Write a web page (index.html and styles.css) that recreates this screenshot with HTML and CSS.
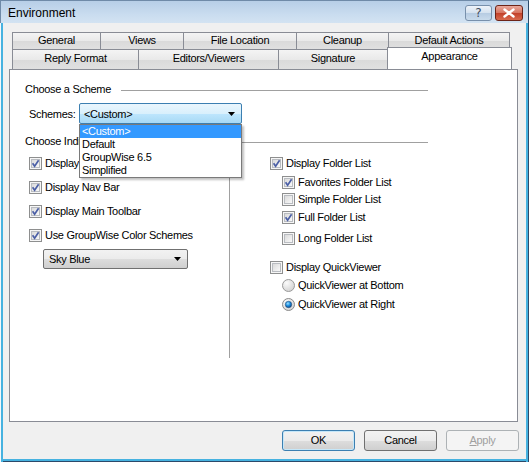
FILE: index.html
```html
<!DOCTYPE html>
<html>
<head>
<meta charset="utf-8">
<link rel="stylesheet" href="styles.css">
</head>
<body>
<svg class="defs" width="0" height="0">
  <defs>
    <linearGradient id="cbg" x1="0" y1="0" x2="1" y2="1">
      <stop offset="0" stop-color="#d8d8d8"/>
      <stop offset="1" stop-color="#fbfbfb"/>
    </linearGradient>
    <radialGradient id="rbg" cx="0.35" cy="0.3" r="0.8">
      <stop offset="0" stop-color="#fbfbfb"/>
      <stop offset="1" stop-color="#cfcfcf"/>
    </radialGradient>
    <radialGradient id="dot" cx="0.4" cy="0.35" r="0.7">
      <stop offset="0" stop-color="#9fe0ff"/>
      <stop offset="0.5" stop-color="#1a8ee0"/>
      <stop offset="1" stop-color="#0c3f80"/>
    </radialGradient>
    <symbol id="cb" viewBox="0 0 13 13">
      <rect x="0.5" y="0.5" width="12" height="12" fill="#f6f6f6" stroke="#8e8f8f"/>
      <rect x="2.5" y="2.5" width="8" height="8" fill="url(#cbg)" stroke="#b9bcc1"/>
    </symbol>
    <symbol id="cbc" viewBox="0 0 13 13">
      <rect x="0.5" y="0.5" width="12" height="12" fill="#f6f6f6" stroke="#8e8f8f"/>
      <rect x="2.5" y="2.5" width="8" height="8" fill="url(#cbg)" stroke="#b9bcc1"/>
      <path d="M3.6 6.2 L5.6 9.2 L9.6 3.2" stroke="#4b5fa6" stroke-width="1.7" fill="none"/>
    </symbol>
    <symbol id="rb" viewBox="0 0 13 13">
      <circle cx="6.5" cy="6.5" r="6" fill="url(#rbg)" stroke="#9a9a9a"/>
    </symbol>
    <symbol id="rbc" viewBox="0 0 13 13">
      <circle cx="6.5" cy="6.5" r="6" fill="url(#rbg)" stroke="#8a8a8a"/>
      <circle cx="6.5" cy="6.5" r="3.2" fill="url(#dot)" stroke="#2a4f7a" stroke-width="0.6"/>
    </symbol>
    <symbol id="arrow" viewBox="0 0 7 4">
      <path d="M0 0 H7 L3.5 4 Z" fill="#000"/>
    </symbol>
  </defs>
</svg>

<div class="win">
  <div class="titlebar">
    <span class="title">Environment</span>
    <div class="tbtns">
      <div class="tbtn help">?</div>
      <div class="tbtn close">
        <svg width="14" height="10" viewBox="0 0 14 10"><path d="M2.5 1.5 L11.5 8.5 M11.5 1.5 L2.5 8.5" stroke="#fff" stroke-width="2.4" stroke-linecap="round"/></svg>
      </div>
    </div>
  </div>
  <div class="client">
    <div class="tabs">
      <div class="tabrow row1">
        <div class="tab w-general">General</div>
        <div class="tab w-views">Views</div>
        <div class="tab w-file">File Location</div>
        <div class="tab w-cleanup">Cleanup</div>
        <div class="tab w-default">Default Actions</div>
      </div>
      <div class="tabrow row2">
        <div class="tab w-reply">Reply Format</div>
        <div class="tab w-editors">Editors/Viewers</div>
        <div class="tab w-sig">Signature</div>
        <div class="tab active w-appear">Appearance</div>
      </div>
    </div>

    <div class="panel">
      <div class="ghead"><span>Choose a Scheme</span><i class="gline"></i></div>
      <div class="schemes">
        <span class="slabel">Schemes:</span>
        <div class="combo-wrap">
          <div class="combo hot"><span>&lt;Custom&gt;</span><svg class="arr" width="7" height="4"><use href="#arrow"/></svg></div>
          <div class="droplist">
            <div class="item sel">&lt;Custom&gt;</div>
            <div class="item">Default</div>
            <div class="item">GroupWise 6.5</div>
            <div class="item">Simplified</div>
          </div>
        </div>
      </div>
      <div class="ghead g2"><span class="clip2">Choose Individual Settings</span><i class="gline"></i></div>

      <div class="cols">
        <div class="lcol">
          <div class="row"><svg class="box" width="13" height="13"><use href="#cbc"/></svg><span class="clip1">Display Toolbar</span></div>
          <div class="row"><svg class="box" width="13" height="13"><use href="#cbc"/></svg><span>Display Nav Bar</span></div>
          <div class="row"><svg class="box" width="13" height="13"><use href="#cbc"/></svg><span>Display Main Toolbar</span></div>
          <div class="row"><svg class="box" width="13" height="13"><use href="#cbc"/></svg><span>Use GroupWise Color Schemes</span></div>
          <div class="combo gray sky"><span>Sky Blue</span><svg class="arr" width="7" height="4"><use href="#arrow"/></svg></div>
        </div>
        <div class="rcol">
          <div class="row"><svg class="box" width="13" height="13"><use href="#cbc"/></svg><span>Display Folder List</span></div>
          <div class="row sub m6"><svg class="box" width="13" height="13"><use href="#cbc"/></svg><span>Favorites Folder List</span></div>
          <div class="row sub m4"><svg class="box" width="13" height="13"><use href="#cb"/></svg><span>Simple Folder List</span></div>
          <div class="row sub m5"><svg class="box" width="13" height="13"><use href="#cbc"/></svg><span>Full Folder List</span></div>
          <div class="row sub m8"><svg class="box" width="13" height="13"><use href="#cb"/></svg><span>Long Folder List</span></div>
          <div class="row m16"><svg class="box" width="13" height="13"><use href="#cb"/></svg><span>Display QuickViewer</span></div>
          <div class="row sub m5"><svg class="box" width="13" height="13"><use href="#rb"/></svg><span>QuickViewer at Bottom</span></div>
          <div class="row sub m6"><svg class="box" width="13" height="13"><use href="#rbc"/></svg><span>QuickViewer at Right</span></div>
        </div>
      </div>
    </div>

    <div class="buttons">
      <div class="btn default">OK</div>
      <div class="btn">Cancel</div>
      <div class="btn disabled"><u>A</u>pply</div>
    </div>
  </div>
</div>
</body>
</html>
```

FILE: styles.css
```css
* { box-sizing: border-box; }
html, body { margin: 0; padding: 0; }
body {
  width: 529px;
  height: 462px;
  overflow: hidden;
  font-family: "Liberation Sans", Arial, sans-serif;
  font-size: 11px;
  letter-spacing: -0.3px;
  color: #000;
  background: #f0f0f0;
}
.defs { position: absolute; width: 0; height: 0; }

.win {
  width: 529px;
  height: 462px;
  display: flex;
  flex-direction: column;
  background: #f0f0f0;
}

.titlebar {
  height: 23px;
  flex: none;
  display: flex;
  align-items: center;
  justify-content: space-between;
  padding: 0 5px 0 7px;
  background: linear-gradient(#b7cee7, #c9dcef 60%, #d3e3f2);
  border-top: 1px solid #6f8aa8;
  border-left: 1px solid #6f8aa8;
  border-right: 1px solid #2c4a6a;
}
.title {
  font-size: 12px;
  letter-spacing: 0;
  color: #000;
  padding-top: 1px;
}
.tbtns { display: flex; gap: 3px; padding-top: 1px; }
.tbtn {
  height: 16px;
  border-radius: 3px;
  display: flex;
  align-items: center;
  justify-content: center;
}
.help {
  width: 27px;
  border: 1px solid #7890ab;
  background: linear-gradient(#eef3f9, #d4e1ef 50%, #b6cbe2 51%, #c9dbec);
  color: #3d4b5c;
  font-family: "DejaVu Sans", sans-serif;
  font-size: 12px;
  letter-spacing: 0;
  line-height: 14px;
}
.close {
  width: 28px;
  border: 1px solid #6d2418;
  background: linear-gradient(#e9a99d, #d6735f 50%, #c2402a 51%, #d86a4e);
}

.client {
  flex: 1;
  display: flex;
  flex-direction: column;
  padding: 0 0 0 9px;
  box-shadow: inset 1px 0 0 #f4f8fb, inset 3px 0 0 #46b2e0,
              inset -1px 0 0 #2c4a6a, inset -3px 0 0 #46b2e0,
              inset 0 -1px 0 #2c4a6a, inset 0 -3px 0 #46b2e0;
}

/* tabs */
.tabs { margin-top: 9px; padding-left: 3px; height: 37px; position: relative; z-index: 2; }
.tabrow { display: flex; }
.tab {
  border: 1px solid #898c95;
  background: linear-gradient(#f4f4f4, #e9e9e9 50%, #dadada 51%, #e0e0e0);
  text-align: center;
  margin-left: -1px;
  white-space: nowrap;
}
.tab:first-child { margin-left: 0; }
.row1 .tab { height: 18px; line-height: 15px; }
.row2 { margin-top: -1px; }
.row2 .tab { height: 20px; line-height: 17px; border-bottom: none; }
.row2 .tab.active {
  height: 22px;
  margin-top: -2px;
  background: #fff;
  line-height: 17px;
}
.w-general { width: 89px; }
.w-views { width: 84px; }
.w-file { width: 114px; }
.w-cleanup { width: 93px; }
.w-default { width: 122px; }
.w-reply { width: 127px; }
.w-editors { width: 141px; }
.w-sig { width: 110px; }
.w-appear { width: 125px; }

/* panel */
.panel {
  width: 509px;
  height: 353px;
  flex: none;
  background: #fff;
  border: 1px solid #898c95;
  padding: 13px 0 0 15px;
  position: relative;
  z-index: 1;
}
.ghead {
  display: flex;
  align-items: center;
  height: 13px;
  line-height: 13px;
  width: 403px;
}
.ghead .gline {
  flex: 1;
  height: 1px;
  background: #a0a0a0;
  margin-left: 10px;
  margin-top: 2px;
}
.g2 { margin-top: 11px; }
.clip2 {
  display: block;
  width: 54px;
  overflow: hidden;
  white-space: nowrap;
  margin-right: 140px;
}
.clip1 {
  display: block;
  width: 36px;
  overflow: hidden;
  white-space: nowrap;
}

.schemes {
  display: flex;
  align-items: center;
  margin-top: 7px;
  height: 21px;
  padding-left: 4px;
}
.slabel { width: 50px; }
.combo-wrap { position: relative; }
.combo {
  display: flex;
  align-items: center;
  justify-content: space-between;
  border-radius: 2px;
  padding: 0 6px 0 4px;
}
.combo .arr { display: block; }
.combo.hot {
  width: 163px;
  height: 21px;
  border: 1px solid #3c7fb1;
  background: linear-gradient(#eaf6fd, #d9f0fc 50%, #bee6fd 51%, #a7d9f5);
}
.combo.gray {
  border: 1px solid #707070;
  background: linear-gradient(#f2f2f2, #ebebeb 50%, #dddddd 51%, #cfcfcf);
}
.droplist {
  position: absolute;
  left: 0;
  top: 21px;
  width: 163px;
  height: 54px;
  background: #fff;
  border: 1px solid #7a7a7a;
  box-shadow: 2px 2px 2px rgba(0, 0, 0, 0.25);
  padding: 0;
  z-index: 5;
}
.item {
  height: 13px;
  line-height: 13px;
  padding-left: 2px;
}
.item.sel { background: #3399ff; color: #fff; }

.cols {
  display: flex;
  margin-top: -2px;
  margin-left: -15px;
  height: 212px;
}
.lcol {
  width: 219px;
  display: flex;
  flex-direction: column;
  gap: 11px;
  padding: 11px 0 0 19px;
}
.rcol {
  flex: 1;
  border-left: 1px solid #a0a0a0;
  display: flex;
  flex-direction: column;
  padding: 11px 0 0 40px;
}
.row {
  display: flex;
  align-items: center;
  height: 13px;
  gap: 3px;
  white-space: nowrap;
}
.row span { margin-top: -1px; }
.row .box { flex: none; display: block; }
.row.sub { margin-left: 12px; }
.m4 { margin-top: 4px; }
.m5 { margin-top: 5px; }
.m6 { margin-top: 6px; }
.m8 { margin-top: 8px; }
.m16 { margin-top: 16px; }
.sky {
  width: 145px;
  height: 20px;
  margin-left: 14px;
  margin-top: -4px;
  padding-left: 5px;
}

/* buttons */
.buttons {
  display: flex;
  justify-content: flex-end;
  gap: 9px;
  margin-top: 8px;
  padding-right: 10px;
}
.btn {
  width: 73px;
  height: 21px;
  border: 1px solid #707070;
  border-radius: 3px;
  background: linear-gradient(#f2f2f2, #ebebeb 50%, #dddddd 51%, #cfcfcf);
  text-align: center;
  line-height: 19px;
}
.btn.default {
  border-color: #3c7fb1;
  box-shadow: inset 0 0 0 1px #c5e7f9;
}
.btn.disabled {
  border-color: #adb2b5;
  background: #f4f4f4;
  color: #a0a0a0;
}
.btn u { text-decoration: underline; }
```
